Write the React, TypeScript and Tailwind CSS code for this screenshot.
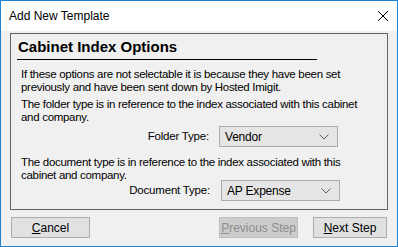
import React from "react";

function Chevron() {
  return (
    <svg width="10" height="6" viewBox="0 0 10 6" className="shrink-0">
      <path d="M0.5 0.5 L5 5 L9.5 0.5" fill="none" stroke="#5a5a5a" strokeWidth="1" />
    </svg>
  );
}

function Select({ value, w }: { value: string; w: string }) {
  return (
    <div className={`${w} h-[21px] border border-[#acacac] bg-[#e5e5e5] flex items-center justify-between pl-[5px] pr-[8px]`}>
      <span className="text-[12px] text-black leading-none tracking-[-0.2px]">{value}</span>
      <Chevron />
    </div>
  );
}

export default function App() {
  return (
    <div
      className="w-[398px] h-[247px] border border-[#1883d7] bg-[#f0f0f0] flex flex-col overflow-hidden"
      style={{ fontFamily: '"Liberation Sans", Arial, sans-serif' }}
    >
      <div className="h-[30px] bg-white flex items-center justify-between pl-[8px] pr-[8px] shrink-0">
        <span className="text-[12px] text-black">Add New Template</span>
        <svg width="12" height="12" viewBox="0 0 12 12">
          <path d="M1 1 L11 11 M11 1 L1 11" stroke="#000" strokeWidth="1" />
        </svg>
      </div>
      <div className="flex-1 flex flex-col px-[9px] pt-[2px]">
        <div className="h-[177px] border border-[#646464] flex flex-col pl-[6px] pr-[6px] pt-[3px]">
          <div className="text-[15px] font-bold text-black leading-[20px] pl-[1px] w-[300px] border-b border-black pb-[2px]">
            Cabinet Index Options
          </div>
          <div className="pl-[4px] pt-[8px] text-[11.5px] tracking-[-0.3px] text-black leading-[13px] whitespace-nowrap">
            <p>If these options are not selectable it is because they have been set<br />previously and have been sent down by Hosted Imigit.</p>
            <p className="mt-[4px]">The folder type is in reference to the index associated with this cabinet<br />and company.</p>
          </div>
          <div className="flex items-center mt-[2px]">
            <span className="w-[192px] text-right text-[11.5px] tracking-[-0.2px] text-black">Folder Type:</span>
            <div className="ml-[10px]">
              <Select value="Vendor" w="w-[119px]" />
            </div>
          </div>
          <div className="pl-[4px] pt-[9px] text-[11.5px] tracking-[-0.3px] text-black leading-[13px] whitespace-nowrap">
            <p>The document type is in reference to the index associated with this<br />cabinet and company.</p>
          </div>
          <div className="flex items-center mt-[-2px]">
            <span className="w-[193px] text-right text-[11.5px] tracking-[-0.2px] text-black">Document Type:</span>
            <div className="ml-[11px]">
              <Select value="AP Expense" w="w-[119px]" />
            </div>
          </div>
        </div>
        <div className="flex items-center mt-[7px] h-[21px]">
          <button className="w-[79px] h-[21px] border border-[#adadad] bg-[#e1e1e1] text-[12px] text-black flex items-center justify-center ml-[1px]">
            <span><u>C</u>ancel</span>
          </button>
          <div className="flex-1" />
          <button className="w-[79px] h-[21px] border border-[#bfbfbf] bg-[#cccccc] text-[12px] text-[#8d8d8d] flex items-center justify-center">
            <span><u>P</u>revious Step</span>
          </button>
          <button className="w-[74px] h-[21px] border border-[#adadad] bg-[#e1e1e1] text-[12px] text-black flex items-center justify-center ml-[15px] mr-[1px]">
            <span><u>N</u>ext Step</span>
          </button>
        </div>
      </div>
    </div>
  );
}
